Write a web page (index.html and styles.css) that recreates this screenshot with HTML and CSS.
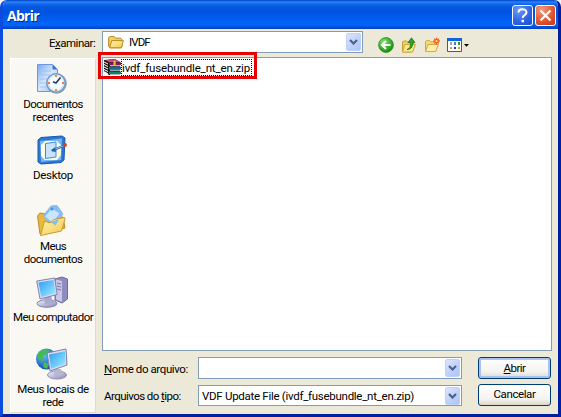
FILE: index.html
```html
<!DOCTYPE html>
<html lang="pt-BR">
<head>
<meta charset="utf-8">
<title>Abrir</title>
<link rel="stylesheet" href="styles.css">
</head>
<body>
<svg width="0" height="0" class="defs" aria-hidden="true">
  <defs>
    <linearGradient id="page" x1="0" y1="0" x2="1" y2="1"><stop offset="0" stop-color="#7ba8ee"/><stop offset=".5" stop-color="#d9e8fd"/><stop offset="1" stop-color="#8fb8f2"/></linearGradient>
    <linearGradient id="screen" x1="0" y1="0" x2="1" y2="1"><stop offset="0" stop-color="#2d9bf5"/><stop offset="1" stop-color="#a4f0ff"/></linearGradient>
    <linearGradient id="folder" x1="0" y1="0" x2="1" y2="1"><stop offset="0" stop-color="#fff6b0"/><stop offset="1" stop-color="#f3c850"/></linearGradient>
    <linearGradient id="metal" x1="0" y1="0" x2="1" y2="1"><stop offset="0" stop-color="#f2f2fc"/><stop offset="1" stop-color="#8585b5"/></linearGradient>
    <radialGradient id="globe" cx=".35" cy=".3" r=".8"><stop offset="0" stop-color="#65c8ff"/><stop offset="1" stop-color="#0538a8"/></radialGradient>
    <radialGradient id="green" cx=".35" cy=".3" r=".8"><stop offset="0" stop-color="#8ce078"/><stop offset=".6" stop-color="#35ac28"/><stop offset="1" stop-color="#16800f"/></radialGradient>
  </defs>
</svg>
<div class="window">
  <header class="titlebar">
    <h1>Abrir</h1>
    <button class="caption help" aria-label="Ajuda"><svg width="21" height="21" viewBox="0 0 21 21"><path d="M6.500 7.500C6.500 3.200 14.500 3 14.500 7.400C14.500 10 10.700 10.200 10.700 13" fill="none" stroke="#fff" stroke-width="2"/><path d="M9.500 14.800h2.500v2.400H9.500z" fill="#fff"/></svg></button>
    <button class="caption close" aria-label="Fechar"><svg width="21" height="21" viewBox="0 0 21 21"><path d="M5.500 5.500l10 10M15.500 5.500l-10 10" stroke="#fff" stroke-width="2.200"/></svg></button>
  </header>
  <div class="toolbar">
    <label class="look">E<u>x</u>aminar:</label>
    <div class="combo lookin">
      <svg width="16" height="16" viewBox="0 0 16 16"><path d="M.6 12.500V3.600L2 2.400h4l1.400 1.800h5.400l1 1v7.600l-1 1H2z" fill="#f3cf62" stroke="#b88b22"/><path d="M3.600 6.600h11.800l-2 7.200H1.600z" fill="url(#folder)" stroke="#b88b22"/></svg>
      <span class="t-look">IVDF</span>
      <i class="drop"><svg width="9" height="6" viewBox="0 0 9 6"><path d="M1 1l3.500 3.500L8 1" fill="none" stroke="#4d6185" stroke-width="2.200"/></svg></i>
    </div>
    <div class="tools">
      <svg width="16" height="16" viewBox="0 0 16 16"><circle cx="8" cy="8" r="7.400" fill="url(#green)" stroke="#258a1d" stroke-width=".8"/><path d="M12.500 8H5M8 4L4 8l4 4" fill="none" stroke="#fff" stroke-width="2"/></svg>
      <svg width="16" height="16" viewBox="0 0 16 16"><path d="M1.500 5l1-1h3l1 1h6v8l-2 2h-9z" fill="#f0cf5a" stroke="#c99c2e"/><path d="M4 7.500h10.500L11.500 15H1.500z" fill="#ffe98c" stroke="#d0a53c"/><path d="M6 12.500c3-1 3.500-3 3.500-7H7L10.500.8 14 5.500h-2.200c0 5-2 7-5.800 7z" fill="#35a32b" stroke="#166f14" stroke-width=".7"/></svg>
      <svg width="16" height="16" viewBox="0 0 16 16"><path d="M1.500 13.500V4.500l1-1h3l1.300 1.400H12v8.600z" fill="#f5d978" stroke="#d3a744"/><path d="M4 7.500h10.500L11.500 14.500H1.500z" fill="#fff0a5" stroke="#d3a744"/><path d="M12.500 .8v6.600M9.300 4h6.600M10.200 1.800l4.600 4.600M14.800 1.800l-4.600 4.600" stroke="#f05a23" stroke-width="1.300"/><circle cx="12.500" cy="4.100" r="1.200" fill="#ffe16b"/></svg>
      <svg width="22" height="16" viewBox="0 0 22 16"><path d="M.5 1.500h14v13H.5z" fill="#fff" stroke="#1760ce"/><path d="M0 1h15v3H0z" fill="#1165d8"/><path d="M3 5h2v3H3z" fill="#a6a6b5"/><path d="M7 5h2v3H7z" fill="#5377de"/><path d="M11 5h2v3h-2z" fill="#23a02d"/><path d="M3 10h2v2H3z" fill="#f0886d"/><path d="M7 10h2v2H7z" fill="#2239a0"/><path d="M11 10h2v2h-2z" fill="#d0a11d"/><path d="M17 7h5l-2.500 2.800z" fill="#000"/></svg>
    </div>
  </div>
  <div class="body">
    <nav class="places">
      <a class="place">
        <svg width="32" height="32" viewBox="0 0 32 32"><path d="M1.500 1.500h15l5 5v22h-20z" fill="url(#page)" stroke="#6c98df"/><path d="M16.500 1.500v5h5z" fill="#3b73cf"/><path d="M4 8h11M4 12h10M4 16h7M4 20h6M4 24h6" stroke="#a1c3f3"/><circle cx="20.500" cy="20.500" r="10.300" fill="#8aa0b9"/><circle cx="20" cy="20" r="9.200" fill="#d9ebf8" stroke="#7d9dc0" stroke-width="1.600"/><circle cx="20" cy="20" r="6.800" fill="#f8fcff"/><path d="M20 12v2M20 26v2M12 20h2M26 20h2" stroke="#f17848" stroke-width="1.800"/><path d="M24.500 14.500L20 20l-3-1.200" fill="none" stroke="#263c62" stroke-width="1.700"/></svg>
        <span class="tight">Documentos</span><span>recentes</span>
      </a>
      <a class="place">
        <svg width="32" height="32" viewBox="0 0 32 32"><path d="M2 6l3-2.500L26 2l3 2-1 22-3 2.500L5 30l-3-2z" fill="#2b78d3" stroke="#1c56aa"/><path d="M4 7l22-2.500-1 21.500L5 28z" fill="#79b7f4"/><path d="M9 7h12l4 4v10l-4 5H9l-4-4V11z" fill="#fffbe0"/><path d="M9.500 9.500L20 8v15l-10.500 1.500z" fill="#c6e4ff" stroke="#4089db"/><path d="M16 16.500L28.500 11.500" stroke="#244f83" stroke-width="2.400"/><path d="M17 16l11-4.400" stroke="#9fd4ff"/><path d="M19 13l-4 4 5 1z" fill="#2460a4"/><circle cx="29" cy="11" r="1.900" fill="#c94328"/></svg>
        <span class="loose">Desktop</span>
      </a>
      <a class="place">
        <svg width="32" height="32" viewBox="0 0 32 32"><path d="M4 29L1.500 11 4 8l6 1 3 4 14-1 2 11z" fill="#e9b93e" stroke="#bd8c28"/><path d="M7 11L15 1l6-.5L27 9 17 22z" fill="#86bdf4" stroke="#94b8e4"/><path d="M9 11.500l7-8 7.500 5-7 9z" fill="#c9e6ff"/><circle cx="16" cy="4" r="1.500" fill="#4794df"/><path d="M4.500 30.500L8.500 16 14 18 18 14.500l10.500-2 .5 1.500-3.500 12z" fill="url(#folder)" stroke="#cc9830"/><path d="M14.500 17l8.500-2.500-3.500 6z" fill="#7abef2"/></svg>
        <span class="tight">Meus</span><span class="tight">documentos</span>
      </a>
      <a class="place">
        <svg width="32" height="32" viewBox="0 0 32 32"><path d="M19 3l7-2 5.500 2v20L26 27l-7-3z" fill="#8e8cc0" stroke="#6c6b9d"/><path d="M20 3.500l6 1.500v21l-6-2.500z" fill="#c7c7e7"/><path d="M21 7l4 1M21 10l4 1M21 13l4 1" stroke="#7778a9"/><ellipse cx="11" cy="27.500" rx="10" ry="3.800" fill="url(#metal)" stroke="#8785b4"/><path d="M8 21l7-2 2 8-8 1z" fill="#aaaacd"/><path d="M.7 5l18-3 2.500 16.500L4 23z" fill="#dadaf0" stroke="#8583b5"/><path d="M2.500 6.500L17.500 4l2 13L5.300 21z" fill="url(#screen)"/></svg>
        <span class="tight">Meu computador</span>
      </a>
      <a class="place">
        <svg width="34" height="34" viewBox="0 0 34 34"><circle cx="11.500" cy="12" r="10.500" fill="url(#globe)"/><path d="M3 6l6-4 6 1-3 4-4 2 1 5-5-1-2-3zM9 15l5 2-2 5-4-2z" fill="#43b957"/><ellipse cx="22" cy="28" rx="9.500" ry="4" fill="url(#metal)" stroke="#9290b5"/><path d="M18 22h8l2 6-8 1z" fill="#b7b7d1"/><path d="M12 6l19-4 1 16-17 6z" fill="#dedff0" stroke="#807eac"/><path d="M14 7.500L30 4.200 30.500 17 16 21.700z" fill="url(#screen)"/></svg>
        <span>Meus locais de</span><span>rede</span>
      </a>
    </nav>
    <main class="main">
      <section class="files">
        <div class="file">
          <svg width="17" height="17" viewBox="0 0 17 17"><path d="M0 1l11-1 5 3v13H5L0 12z" fill="#181818"/><path d="M1 1.200l10-1L15.500 3H5z" fill="#c94a86"/><path d="M5 3.200h12v2.800H5z" fill="#88184f"/><path d="M5 7.800h12v2.800H5z" fill="#146a9d"/><path d="M5 12.500h12V15H5z" fill="#178060"/><path d="M0 3l4 2M0 5.500l4 2M0 8l4 2M0 10.500l4 2M1 13l3 2" stroke="#fff" stroke-width="1"/><path d="M6 6.700h10M6 11.200h10M6 15.700h10" stroke="#cfe6df"/><path d="M9.500 1.500h2.200v4.500H9.500z" fill="#e3be35"/></svg>
          <span class="t-file">ivdf_fusebundle_nt_en.zip</span>
        </div>
      </section>
      <div class="row name">
        <label><u>N</u>ome do arquivo:</label>
        <div class="combo"><i class="drop"><svg width="9" height="6" viewBox="0 0 9 6"><path d="M1 1l3.500 3.500L8 1" fill="none" stroke="#4d6185" stroke-width="2.200"/></svg></i></div>
        <button class="btn default"><span class="tight"><u>A</u>brir</span></button>
      </div>
      <div class="row type">
        <label class="tight">Arquivos do <u>t</u>ipo:</label>
        <div class="combo"><span class="loose">VDF Update File (ivdf_fusebundle_nt_en.zip)</span><i class="drop"><svg width="9" height="6" viewBox="0 0 9 6"><path d="M1 1l3.500 3.500L8 1" fill="none" stroke="#4d6185" stroke-width="2.200"/></svg></i></div>
        <button class="btn"><span>Cancelar</span></button>
      </div>
    </main>
  </div>
</div>
</body>
</html>
```
FILE: styles.css
```css
* { box-sizing: border-box; }
html, body { margin: 0; width: 561px; height: 417px; overflow: hidden; }
body { background: #f4f4f4; font: 11.5px/13px Roboto, "Liberation Sans", sans-serif; letter-spacing: -.4px; color: #000; }
.defs { position: absolute; }
svg { display: block; flex: none; }
button { margin: 0; padding: 0; font: inherit; color: inherit; letter-spacing: inherit; }
u { text-decoration: underline; text-underline-offset: 1px; text-decoration-thickness: 1px; text-decoration-skip-ink: none; }
span, label { white-space: nowrap; }
.tight { letter-spacing: -.55px; }
.loose { letter-spacing: -.28px; }

.window {
  width: 561px; height: 417px; border-radius: 7px 7px 0 0; overflow: hidden;
  background: #ece9d8;
  border: solid #0a4be0; border-width: 0 3px 3px;
  border-right-color: #001ea0; border-bottom-color: #001ea0;
  display: flex; flex-direction: column;
}
.titlebar {
  height: 29px; margin: 0 -3px; padding: 1px 5px 0 7px; flex: none;
  display: flex; align-items: center; gap: 2px;
  background: linear-gradient(#0048cc 0, #2b83f5 2px, #1267ec 4px, #0655dd 7px, #0054e3 13px, #0060f4 20px, #0264fb 25px, #0050d8 27px, #0040be 29px);
  box-shadow: inset -2px 0 1px #0034b4;
}
.titlebar h1 {
  margin: 1px auto 0 0; font: bold 14px/16px "Open Sans", "Liberation Sans", sans-serif;
  color: #fff; letter-spacing: -.7px; text-shadow: 1px 1px #0a2a88;
}
.caption { width: 21px; height: 21px; border: 1px solid #fff; border-radius: 3px; display: flex; align-items: center; justify-content: center; overflow: hidden; margin-top: 1px; }
.help { background: radial-gradient(circle at 30% 20%, #719bf5, #2c62e4 60%, #1b4dc8); }
.close { background: radial-gradient(circle at 30% 20%, #f29a7b, #e0522d 60%, #bd3915); }

.toolbar { height: 28px; padding: 2px 0 0 46px; flex: none; display: flex; align-items: flex-start; }
.look { width: 53px; padding-top: 6px; letter-spacing: -.5px; }
.combo { height: 22px; width: 264px; border: 1px solid #7f9db9; background: #fff; display: flex; align-items: center; padding: 1px 1px 1px 3px; }
.lookin { width: 261px; padding-left: 5px; gap: 5px; }
.t-look { letter-spacing: -.9px; }
.drop { width: 15px; height: 18px; margin-left: auto; border-radius: 2px; background: linear-gradient(135deg, #dbe5ff, #bccffb 60%, #aec4f5); border: 1px solid #c1d1f8; display: flex; align-items: center; justify-content: center; }
.tools { display: flex; gap: 7px; padding: 6px 0 0 15px; }

.body { flex: 1; display: flex; padding-left: 7px; gap: 6px; }
.places { width: 86px; height: 355px; margin-top: 1px; background: #f9f8f3; border: 1px solid #fff; border-right-color: #dfdccb; border-bottom-color: #dfdccb; padding-top: 4px; }
.place { height: 71px; display: flex; flex-direction: column; align-items: center; }
.place svg { margin: 0 2px 3px 0; }
.place:last-child svg { margin-bottom: 2px; }

.main { width: 450px; }
.files { height: 294px; border: 1px solid #7f9db9; background: #fff; margin-bottom: 6px; }
.file { width: 159px; height: 27px; margin: -6px 0 0 -5px; position: relative; border: 3px solid #e60000; padding: 4px 0 0 3px; display: flex; align-items: flex-start; }
.t-file { height: 17px; line-height: 16px; border: 1px dotted #000; width: 131px; letter-spacing: -.15px; }
.row { display: flex; align-items: center; height: 22px; margin-bottom: 6px; padding-left: 2px; }
.row label { width: 94px; padding-top: 2px; }
.combo .loose { padding-top: 1px; }
.row.type { height: 21px; }
.row.type .combo { height: 21px; }
.btn { width: 73px; height: 22px; margin-left: 16px; border: 1px solid #003c74; border-radius: 3px; background: linear-gradient(#fff, #f4f3ee 70%, #dcd7cb); display: flex; align-items: center; justify-content: center; }
.row.type .btn { position: relative; top: -1px; }
.btn.default { box-shadow: inset 0 0 0 2px #a9c2f0; }
```
